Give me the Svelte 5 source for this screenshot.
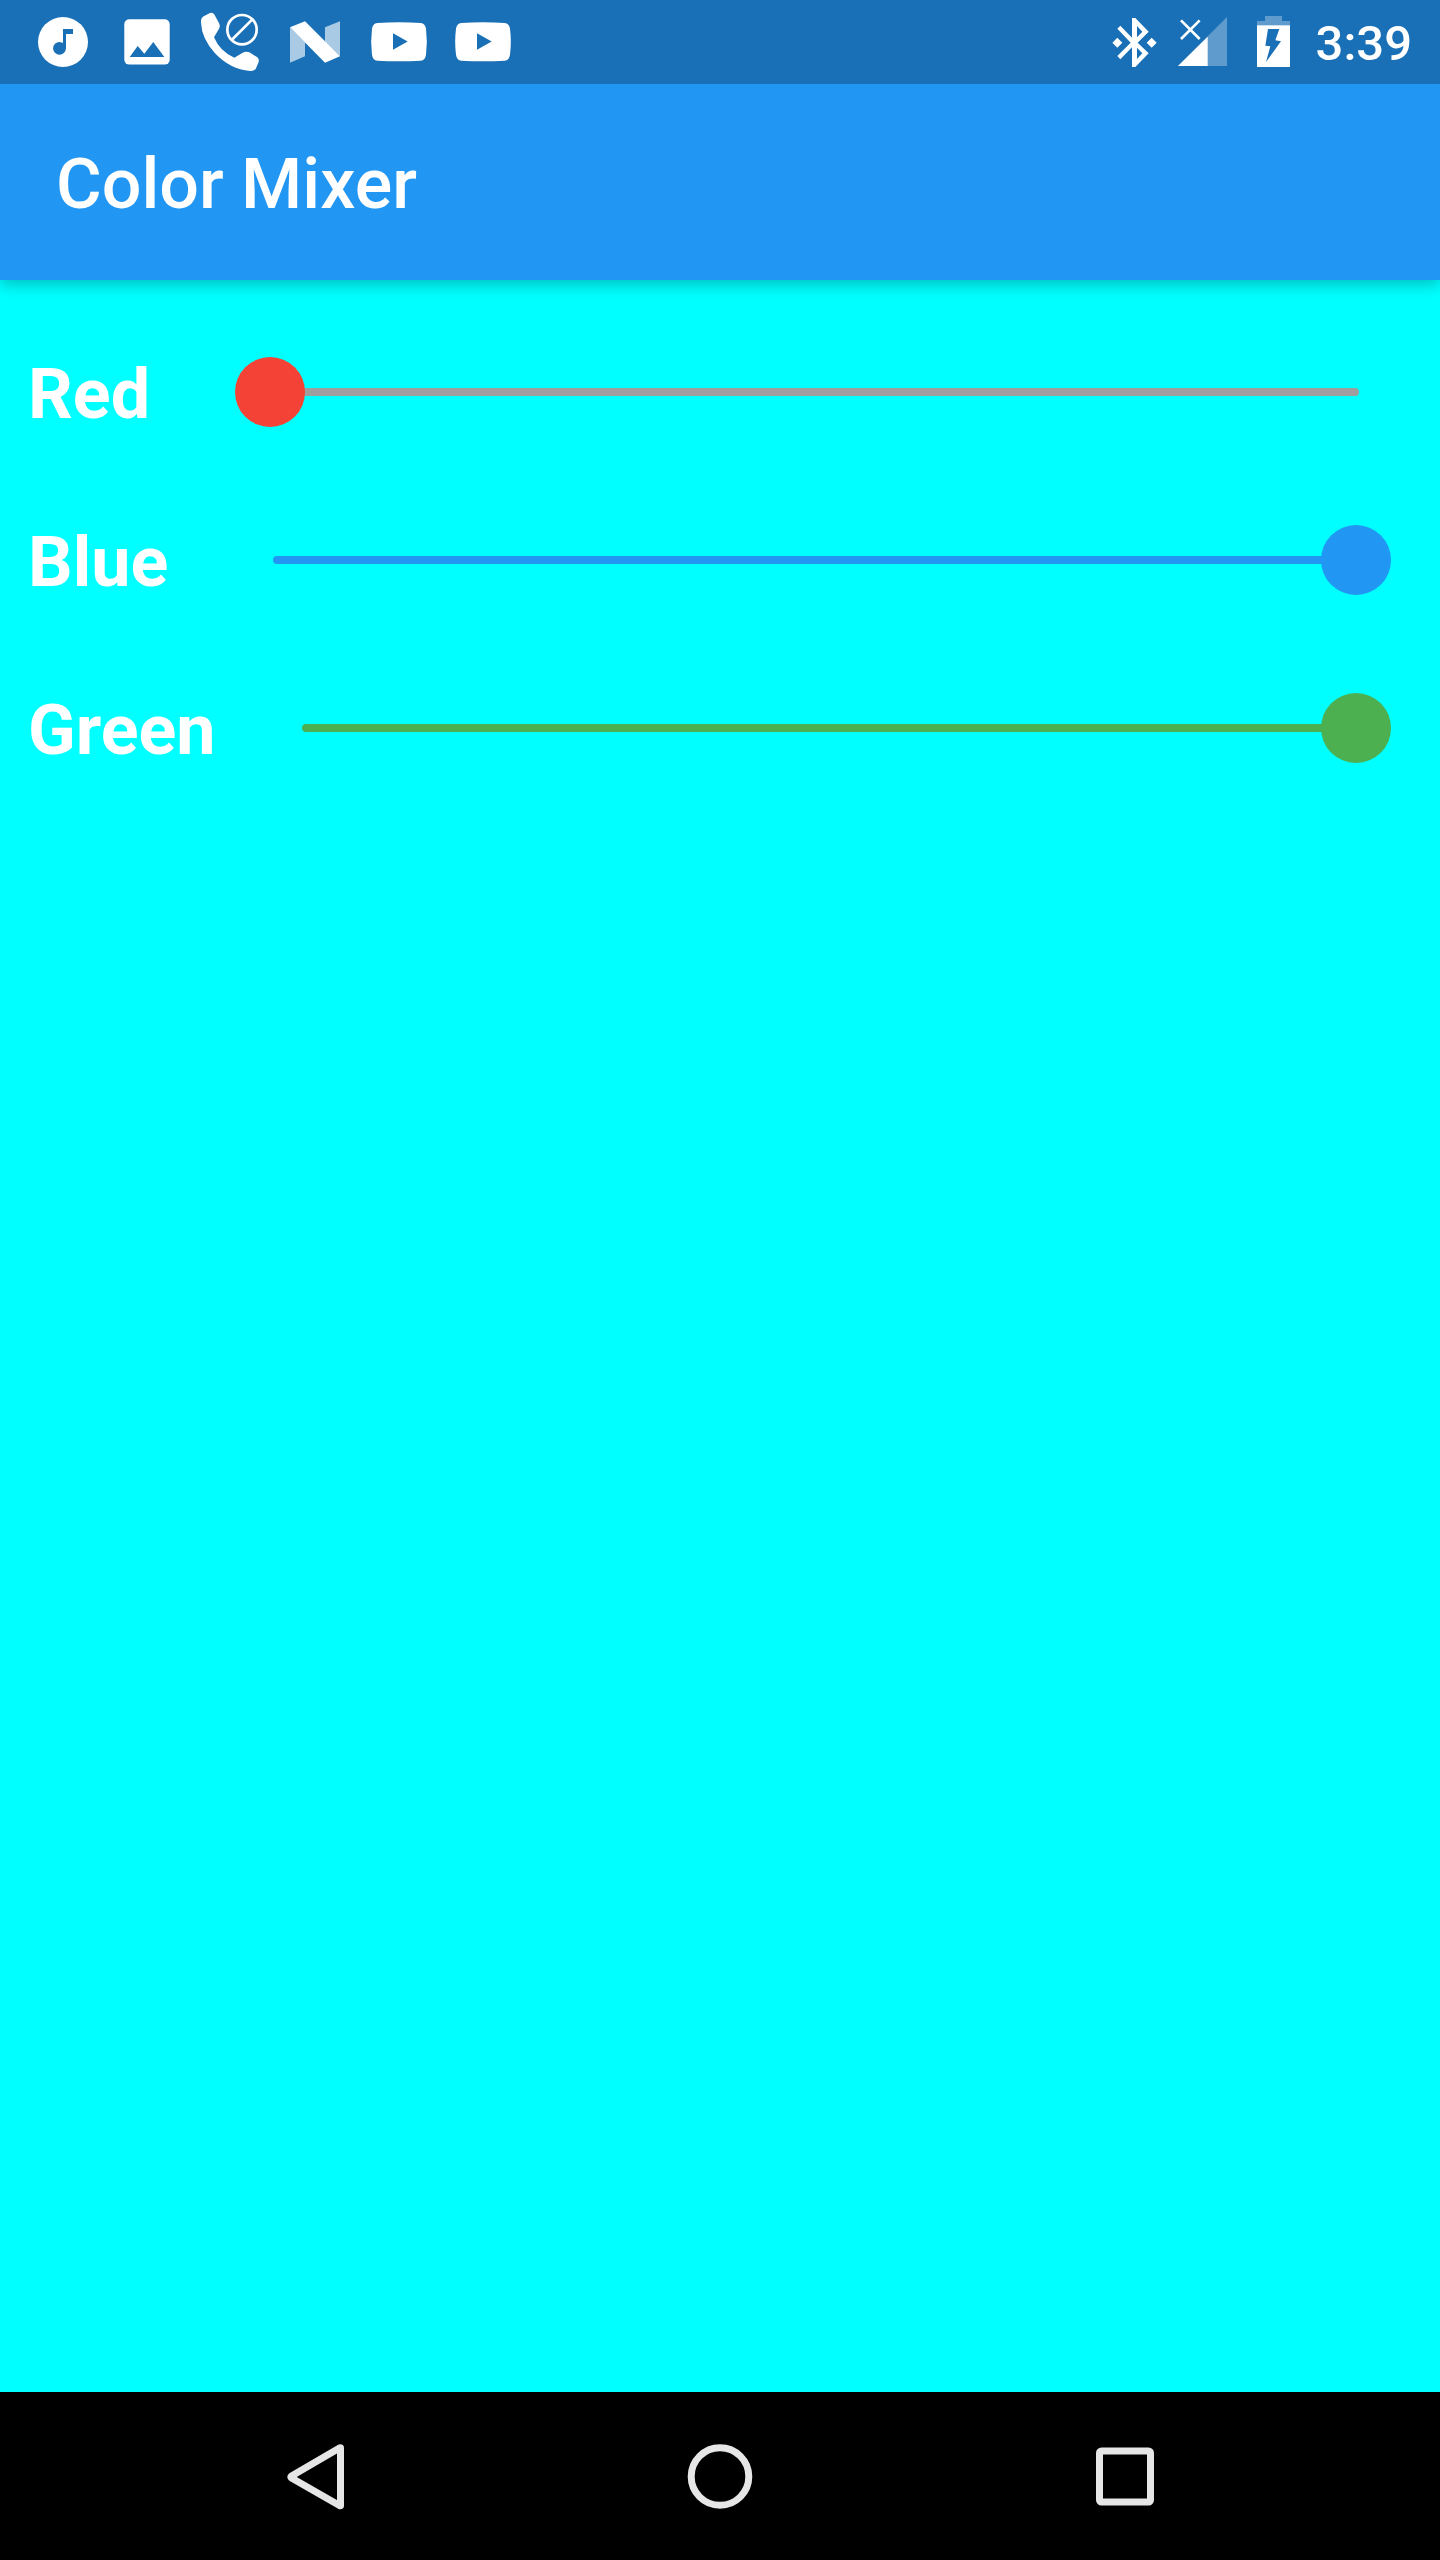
<script>
  let channels = $state([
    { id: 'red', label: 'Red', value: 0 },
    { id: 'blue', label: 'Blue', value: 255 },
    { id: 'green', label: 'Green', value: 255 }
  ]);

  let mixed = $derived(
    `rgb(${channels[0].value}, ${channels[2].value}, ${channels[1].value})`
  );
</script>

<div class="screen">
  <div class="status">
    <div class="notifications">
      <svg class="note-icon" viewBox="0 0 84 84" aria-hidden="true">
        <circle cx="42" cy="42" r="25" fill="#fff" />
        <path class="cut" d="M42 29H52V34H45V48H42z" />
        <circle class="cut" cx="38.5" cy="48.3" r="6.4" />
      </svg>
      <svg class="note-icon" viewBox="0 0 84 84" aria-hidden="true">
        <rect x="19.3" y="19.2" width="45.4" height="45.4" rx="5" fill="#fff" />
        <path class="cut" d="M24.7 57 32.7 46 39.3 53.7 48.3 42 59.3 57z" />
      </svg>
      <svg class="note-icon" viewBox="567 0 252 252" aria-hidden="true">
        <path
          fill="#fff"
          d="M603 68Q602 54 611 49L630 39Q639 37 644 45L658 71Q661 79 657 86L642 112Q660 155 703 173L728 158Q738 153 748 157L771 171Q778 176 776 186L767 207Q761 214 750 213Q690 208 645 160Q605 115 603 68z"
        />
        <g fill="none" stroke="#fff" stroke-width="8">
          <circle cx="726" cy="89" r="44" />
          <path d="M757 58 695 120" />
        </g>
      </svg>
      <svg class="note-icon" viewBox="9 0 252 252" aria-hidden="true">
        <path fill="#a8cae4" d="M60 82 105 127V169L60 188zM165 82 210 64V169L165 125z" />
        <path fill="#fff" d="M60 82 105 64 210 169 165 188z" />
      </svg>
      {#each [1, 2] as n (n)}
        <svg class="note-icon" viewBox="261 0 252 252" aria-hidden="true">
          <path
            fill="#fff"
            d="M322 69Q387 65 452 69Q466 71 468 86Q473 125 468 164Q466 180 452 182Q387 185 322 182Q308 180 306 164Q301 125 306 86Q308 71 322 69z"
          />
          <path class="cut" d="M369 100 413 124.500 369 149z" />
        </svg>
      {/each}
    </div>
    <div class="system">
      <svg class="system-icon" viewBox="57 0 147 252" aria-hidden="true">
        <path
          fill="#fff"
          fill-rule="evenodd"
          d="M126 54H136L176 95 143 128 176 160 136 201H126V142L91 178 82 168 122 128 82 86 91 77 126 113zM141 78V112L157 95zM141 143V177L157 160zM82 113 97 128 82 143 67 128zM185 113 200 128 185 143 170 128z"
        />
      </svg>
      <svg class="system-icon" viewBox="264 0 147 252" aria-hidden="true">
        <path class="dim" d="M411 51V198H264z" />
        <path fill="#fff" d="M353 110V198H264z" />
        <path fill="none" stroke="#fff" stroke-width="8" d="M273 61 329 117M329 61 273 117" />
      </svg>
      <svg class="system-icon" viewBox="471 0 147 252" aria-hidden="true">
        <path class="dim" d="M525 48H576V63H600V76H501V63H525z" />
        <path fill="#fff" d="M501 76H600V201H501z" />
        <path class="cut" d="M534 87H568L556 121 573 124 528 186 541 139 526 137z" />
      </svg>
      <time>3:39</time>
    </div>
  </div>

  <header>
    <h1>Color Mixer</h1>
  </header>

  <main style:background-color={mixed}>
    {#each channels as channel (channel.id)}
      <div class="row {channel.id}">
        <label for={channel.id}>{channel.label}</label>
        <div class="slider" style:--fill="{(channel.value / 255) * 100}%">
          <span class="line"></span>
          <input id={channel.id} type="range" min="0" max="255" bind:value={channel.value} />
        </div>
      </div>
    {/each}
  </main>

  <nav>
    <button type="button" aria-label="Back">
      <svg viewBox="0 0 72 72" aria-hidden="true">
        <path d="M61.500 8V65.500Q61.500 66 60.500 65.500L12.500 38Q11.500 37 12.500 36L60.500 8Q61.500 7.500 61.500 8z" />
      </svg>
    </button>
    <button type="button" aria-label="Home">
      <svg viewBox="0 0 72 72" aria-hidden="true">
        <circle cx="36" cy="36.500" r="28.800" />
      </svg>
    </button>
    <button type="button" aria-label="Recent apps">
      <svg viewBox="0 0 72 72" aria-hidden="true">
        <rect x="10.500" y="11" width="51" height="51" rx="2" />
      </svg>
    </button>
  </nav>
</div>

<style>
  :global(body) {
    margin: 0;
  }

  .screen {
    display: flex;
    flex-direction: column;
    min-height: 100vh;
    font-family: Roboto, sans-serif;
    color: #fff;
  }

  .status {
    display: flex;
    justify-content: space-between;
    height: 84px;
    padding: 0 28px 0 21px;
    background: #1970b6;
  }

  .notifications,
  .system {
    display: flex;
    align-items: center;
  }

  .system {
    gap: 20px;
  }

  .note-icon {
    width: 84px;
    height: 84px;
  }

  .system-icon {
    width: 49px;
    height: 84px;
  }

  .cut {
    fill: #1970b6;
  }

  .dim {
    fill: #5f9bcc;
  }

  time {
    padding-top: 4px;
    font-size: 49px;
    font-weight: 500;
    line-height: 60px;
  }

  header {
    position: relative;
    display: flex;
    align-items: center;
    height: 196px;
    padding: 4px 56px 0;
    box-sizing: border-box;
    background: #2196f3;
    box-shadow: 0 5px 14px rgba(0, 0, 0, 0.24);
    clip-path: inset(0 0 -30px 0);
  }

  h1 {
    margin: 0;
    font-size: 70px;
    font-weight: 500;
    line-height: 84px;
  }

  main {
    flex: 1;
    padding: 28px 49px 28px 28px;
  }

  .row {
    display: flex;
    align-items: center;
    height: 168px;
  }

  .red {
    --tint: #f44336;
    gap: 85px;
  }

  .blue {
    --tint: #2196f3;
    gap: 73px;
  }

  .green {
    --tint: #4caf50;
    gap: 54px;
  }

  label {
    padding-top: 4px;
    font-size: 70px;
    font-weight: 700;
    line-height: 84px;
  }

  .slider {
    display: grid;
    flex: 1;
    align-items: center;
  }

  .line,
  input {
    grid-area: 1 / 1;
  }

  .line {
    height: 8px;
    margin: 0 32px;
    border-radius: 4px;
    background: linear-gradient(to right, var(--tint) var(--fill), #9e9e9e var(--fill));
  }

  input {
    appearance: none;
    width: 100%;
    height: 70px;
    margin: 0;
    background: none;
  }

  input::-webkit-slider-thumb {
    appearance: none;
    width: 70px;
    height: 70px;
    border: 0;
    border-radius: 50%;
    background: var(--tint);
  }

  input::-moz-range-thumb {
    width: 70px;
    height: 70px;
    border: 0;
    border-radius: 50%;
    background: var(--tint);
  }

  nav {
    display: flex;
    height: 168px;
    padding: 0 112px;
    background: #000;
  }

  button {
    display: flex;
    flex: 1;
    align-items: center;
    justify-content: center;
    padding: 0;
    border: 0;
    background: none;
  }

  button svg {
    width: 72px;
    height: 72px;
    fill: none;
    stroke: #e6e6e6;
    stroke-width: 7;
    stroke-linejoin: round;
  }
</style>
